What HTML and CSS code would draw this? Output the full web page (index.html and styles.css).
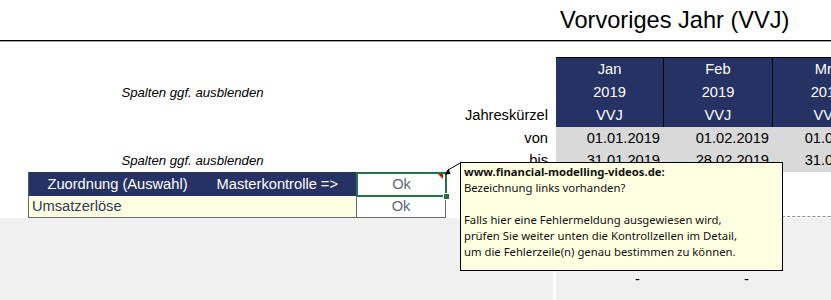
FILE: index.html
```html
<!DOCTYPE html>
<html lang="de">
<head>
<meta charset="utf-8">
<title>Vorvoriges Jahr (VVJ)</title>
<link rel="stylesheet" href="styles.css">
</head>
<body>
<div class="sheet">
  <div class="row r-title">
    <div class="title">Vorvoriges Jahr (VVJ)</div>
  </div>
  <div class="rule"></div>
  <div class="spacer"></div>

  <div class="row r-23 r-top">
    <div class="navy first">Jan</div>
    <div class="navy">Feb</div>
    <div class="navy">Mrz</div>
  </div>
  <div class="row r-23">
    <div class="note">Spalten ggf. ausblenden</div>
    <div class="navy first">2019</div>
    <div class="navy">2019</div>
    <div class="navy">2019</div>
  </div>
  <div class="row r-23">
    <div class="lbl">Jahreskürzel</div>
    <div class="navy first">VVJ</div>
    <div class="navy">VVJ</div>
    <div class="navy">VVJ</div>
  </div>
  <div class="row r-22">
    <div class="lbl">von</div>
    <div class="date first">01.01.2019</div>
    <div class="date">01.02.2019</div>
    <div class="date">01.03.2019</div>
  </div>
  <div class="row r-23">
    <div class="note">Spalten ggf. ausblenden</div>
    <div class="lbl">bis</div>
    <div class="date first">31.01.2019</div>
    <div class="date">28.02.2019</div>
    <div class="date">31.03.2019</div>
  </div>
  <div class="row r-24">
    <div class="bar bar-left">Zuordnung (Auswahl)</div>
    <div class="bar bar-right">Masterkontrolle =&gt;</div>
    <div class="ok ok-sel">Ok<span class="flag"></span><span class="handle"></span></div>
  </div>
  <div class="row r-22">
    <div class="umsatz">Umsatzerlöse</div>
    <div class="ok ok-box">Ok</div>
    <div class="dashed first"></div>
    <div class="dashed"></div>
    <div class="dashed"></div>
  </div>
  <div class="row r-bottom">
    <div class="gray-left"></div>
    <div class="gray-right">
      <div class="dash">-</div>
      <div class="dash">-</div>
      <div class="dash"></div>
    </div>
  </div>

  <svg class="pointer" width="30" height="24" viewBox="0 0 30 24">
    <line x1="8" y1="12" x2="22" y2="4" stroke="#000" stroke-width="1"/>
    <polygon points="4.5,16.5 10.5,16 8.5,10.5" fill="#000"/>
  </svg>
  <div class="tip">
    <div class="tip-head">www.financial-modelling-videos.de:</div>
    <div>Bezeichnung links vorhanden?</div>
    <div class="blank"></div>
    <div>Falls hier eine Fehlermeldung ausgewiesen wird,</div>
    <div>prüfen Sie weiter unten die Kontrollzellen im Detail,</div>
    <div>um die Fehlerzeile(n) genau bestimmen zu können.</div>
  </div>
</div>
</body>
</html>
```
FILE: styles.css
```css
html, body {
  margin: 0;
  padding: 0;
  overflow: hidden;
  background: #fff;
}
body {
  width: 831px;
  height: 300px;
  font-family: "Liberation Sans", Arial, sans-serif;
  font-size: 14.67px;
  color: #000;
}
.sheet {
  position: relative;
  width: 881px;
  --cols: 28px 178px 151px 89px 107px 3px 107px 109px 109px;
}
.row {
  display: grid;
  grid-template-columns: var(--cols);
  white-space: nowrap;
}
.r-title { height: 40px; }
.title {
  grid-column: 7 / span 3;
  padding-left: 4px;
  font-size: 23.6px;
  line-height: 40px;
}
.rule {
  height: 0;
  border-top: 1px solid #000;
  border-bottom: 1px solid #a6a6a6;
}
.spacer { height: 15px; }

.r-22 { height: 22px; line-height: 22px; }
.r-23 { height: 23px; line-height: 23px; }
.r-24 { height: 24px; line-height: 24px; }
.r-top { height: 24px; }

.first { grid-column: 7; }
.navy {
  background: #263264;
  color: #fff;
  text-align: center;
  overflow: hidden;
}
.navy + .navy { border-left: 1px solid #000; }
.r-top .navy { border-top: 1px solid #000; line-height: 23px; }

.note {
  grid-column: 2 / span 2;
  text-align: center;
  font-style: italic;
  font-size: 13.2px;
}
.lbl {
  grid-column: 5;
  text-align: right;
  padding-right: 5px;
}
.date {
  background: #d9d9d9;
  text-align: right;
  padding-right: 3px;
  overflow: hidden;
}

.bar {
  background: #263264;
  color: #fff;
}
.bar-left {
  grid-column: 2;
  text-align: center;
  border-left: 1px solid #595959;
}
.bar-right {
  text-align: right;
  padding-right: 19px;
}
.ok {
  text-align: center;
  color: #5e6672;
}
.ok-sel { position: relative; }
.ok-sel::before {
  content: "";
  position: absolute;
  left: -1px;
  top: 0;
  right: -1px;
  bottom: -1px;
  border: 2px solid #217346;
}
.flag {
  position: absolute;
  top: 2px;
  right: 3px;
  width: 0;
  height: 0;
  border-top: 5px solid #e00000;
  border-left: 5px solid transparent;
}
.handle {
  position: absolute;
  right: -4px;
  bottom: -4px;
  width: 5px;
  height: 5px;
  background: #217346;
  border: 1px solid #fff;
}

.umsatz {
  grid-column: 2 / span 2;
  background: #ffffe3;
  border-left: 1px solid #6b6b6b;
  border-right: 1px solid #6b6b6b;
  border-bottom: 1px solid #6b6b6b;
  padding-left: 3px;
  color: #2f3a57;
  line-height: 21px;
}
.ok-box {
  border-right: 1px solid #6b6b6b;
  border-bottom: 1px solid #6b6b6b;
  line-height: 21px;
}
.dashed {
  border-bottom: 1px dashed #8c8c8c;
  margin-bottom: 1px;
}
.dashed.first { grid-column: 7; }

.r-bottom { height: 82px; }
.gray-left {
  grid-column: 1 / span 5;
  background: #f0f0f0;
}
.gray-right {
  grid-column: 7 / span 3;
  background: #f0f0f0;
  display: grid;
  grid-template-columns: 107px 109px 109px;
  align-content: start;
  padding-top: 50px;
}
.dash {
  text-align: right;
  padding-right: 23px;
  line-height: 23px;
}

.pointer {
  position: absolute;
  left: 440px;
  top: 158px;
}
.tip {
  position: absolute;
  left: 460px;
  top: 162px;
  width: 323px;
  height: 109px;
  box-sizing: border-box;
  border: 1px solid #000;
  background: #ffffe1;
  padding: 1px 0 0 3px;
  font-family: "Noto Sans", sans-serif;
  font-size: 11.3px;
  line-height: 16px;
  color: #111;
  white-space: nowrap;
}
.tip-head { font-weight: bold; }
.blank { height: 16px; }
```
